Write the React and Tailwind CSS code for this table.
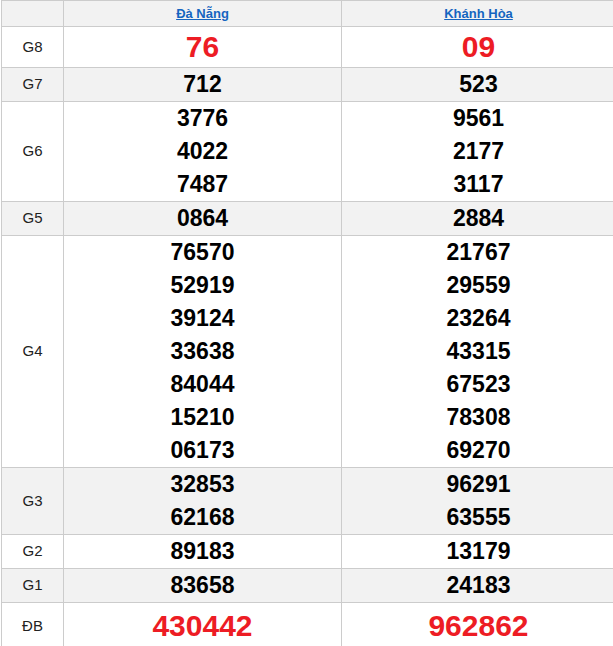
import React from "react";

const rows = [
  { g: "G8", a: ["76"], b: ["09"], big: true },
  { g: "G7", a: ["712"], b: ["523"] },
  { g: "G6", a: ["3776", "4022", "7487"], b: ["9561", "2177", "3117"] },
  { g: "G5", a: ["0864"], b: ["2884"] },
  {
    g: "G4",
    a: ["76570", "52919", "39124", "33638", "84044", "15210", "06173"],
    b: ["21767", "29559", "23264", "43315", "67523", "78308", "69270"],
  },
  { g: "G3", a: ["32853", "62168"], b: ["96291", "63555"] },
  { g: "G2", a: ["89183"], b: ["13179"] },
  { g: "G1", a: ["83658"], b: ["24183"] },
  { g: "ĐB", a: ["430442"], b: ["962862"], big: true, db: true },
];

function Nums({ list, big, db }) {
  return (
    <td className="border border-[#cccccc] p-0 text-center align-middle">
      {list.map((n) =>
        big ? (
          <div
            key={n}
            className={`text-[30px] font-bold text-[#ed1c24] ${db ? "leading-[46px]" : "leading-[40px]"}`}
          >
            {n}
          </div>
        ) : (
          <div key={n} className="text-[23px] font-bold leading-[33px] text-black">
            {n}
          </div>
        )
      )}
    </td>
  );
}

export default function App() {
  return (
    <div className="w-[613px] overflow-hidden bg-white pl-px font-['Liberation_Sans',Arial,sans-serif]">
      <table className="w-[614px] table-fixed border-collapse">
        <colgroup>
          <col className="w-[62px]" />
          <col className="w-[278px]" />
          <col className="w-[274px]" />
        </colgroup>
        <thead>
          <tr className="bg-[#f2f2f2]">
            <th className="h-[26px] border border-[#cccccc] p-0"></th>
            <th className="border border-[#cccccc] p-0 text-[13px] font-bold">
              <a href="#" className="text-[#1565c0] underline">Đà Nẵng</a>
            </th>
            <th className="border border-[#cccccc] p-0 text-[13px] font-bold">
              <a href="#" className="text-[#1565c0] underline">Khánh Hòa</a>
            </th>
          </tr>
        </thead>
        <tbody>
          {rows.map((r, i) => (
            <tr key={r.g} className={i % 2 === 1 ? "bg-[#f2f2f2]" : "bg-white"}>
              <td className="border border-[#cccccc] p-0 text-center align-middle text-[15px] text-[#222222]">
                {r.g}
              </td>
              <Nums list={r.a} big={r.big} db={r.db} />
              <Nums list={r.b} big={r.big} db={r.db} />
            </tr>
          ))}
        </tbody>
      </table>
    </div>
  );
}
